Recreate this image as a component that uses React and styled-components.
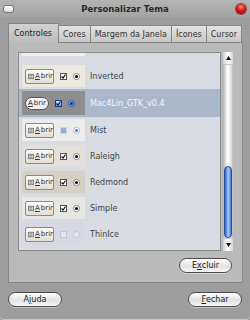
import React from 'react';
import styled, { createGlobalStyle, css } from 'styled-components';

const Global = createGlobalStyle`
  html, body { margin: 0; padding: 0; background: #9c9c9c; }
  body { font-family: "DejaVu Sans", "Liberation Sans", sans-serif; }
`;

const Window = styled.div`
  width: 250px;
  height: 320px;
  box-sizing: border-box;
  background: #9d9d9d;
  display: flex;
  flex-direction: column;
  border-bottom: 1px solid #c4c4c4;
  border-radius: 0 0 4px 4px;
  overflow: hidden;
`;

const TitleBar = styled.div`
  height: 17px;
  display: flex;
  align-items: center;
  padding: 0 4px 0 3px;
  background: linear-gradient(#b4b4b4, #a4a4a4);
`;

const Title = styled.div`
  flex: 1;
  text-align: center;
  font-size: 8.5px;
  font-weight: bold;
  color: #2a2a2a;
  padding-top: 1px;
`;

const Pill = styled.div`
  width: 9px;
  height: 6px;
  border: 1px solid #777;
  border-radius: 3px;
  background: linear-gradient(#ffffff, #dcdcdc);
`;

const CloseBall = styled.div`
  width: 10px;
  height: 10px;
  border-radius: 50%;
  background: radial-gradient(circle at 50% 30%, #ff8a80 0, #e0140c 45%, #8c0000 100%);
  box-shadow: 0 0 0 1px #7a4040;
`;

const Body = styled.div`
  flex: 1;
  display: flex;
  flex-direction: column;
  padding: 6px 7px 0 8px;
`;

const Tabs = styled.div`
  display: flex;
  align-items: flex-end;
  height: 19px;
`;

const Tab = styled.div`
  box-sizing: border-box;
  font-size: 8px;
  color: #333;
  padding: 0 4px;
  height: 17px;
  display: flex;
  align-items: center;
  border: 1px solid #858585;
  border-bottom: none;
  margin-left: -1px;
  background: linear-gradient(#e4e4e4, #c6c6c6);
  ${p => p.$active && css`
    margin-left: 0;
    padding: 0 6px 0 5px;
    background: linear-gradient(#d2d2d2, #bcbcbc);
    color: #222;
    position: relative;
    z-index: 1;
    margin-bottom: -1px;
    height: 20px;
  `}
`;

const Panel = styled.div`
  box-sizing: border-box;
  height: 241px;
  background: #bababa;
  border: 1px solid #858585;
  padding: 9px 9px 0 9px;
  display: flex;
  flex-direction: column;
`;

const ScrollArea = styled.div`
  display: flex;
  gap: 2px;
  height: 199px;
`;

const List = styled.div`
  box-sizing: border-box;
  width: 203px;
  height: 199px;
  background: #d8dce2;
  border: 1px solid #8a8a8a;
  overflow: hidden;
`;

const Stub = styled.div`
  height: 10px;
  padding-left: 3px;
`;

const StubBox = styled.div`
  width: 63px;
  height: 3px;
  background: #f1efe9;
`;

const Row = styled.div`
  height: ${p => p.$h}px;
  display: flex;
  align-items: center;
  padding-left: 3px;
  gap: 5px;
  background: ${p => (p.$selected ? '#aab8cc' : 'transparent')};
`;

const Preview = styled.div`
  box-sizing: border-box;
  width: 63px;
  height: ${p => (p.$tall ? 24 : 22)}px;
  background: ${p => p.$bg};
  display: flex;
  align-items: center;
  padding-left: 3px;
  gap: 6px;
`;

const Name = styled.div`
  font-size: 8px;
  color: ${p => (p.$selected ? '#f4f6fa' : '#444')};
`;

const AbrirButton = styled.div`
  box-sizing: border-box;
  height: 15px;
  width: 29px;
  display: flex;
  align-items: center;
  gap: 1px;
  padding-left: 2px;
  font-size: 7px;
  color: #333;
  border: 1px solid #8e8a82;
  border-radius: 2px;
  background: linear-gradient(#fbfaf7, #e2ded5);
  ${p => p.$mac && css`
    width: 24px;
    height: 13px;
    justify-content: center;
    padding: 0;
    border-radius: 7px;
    border-color: #555;
    background: linear-gradient(#ffffff, #e6e6e6 60%, #f8f8f8);
  `}
  u { text-decoration: underline; }
`;

const Check = styled.div`
  box-sizing: border-box;
  width: 7px;
  height: 7px;
  border: 1px solid ${p => p.$border || '#555'};
  background: ${p => p.$fill || '#fff'};
  display: flex;
  align-items: center;
  justify-content: center;
`;

const Radio = styled.div`
  box-sizing: border-box;
  width: 7px;
  height: 7px;
  border-radius: 50%;
  border: 1px solid ${p => p.$border || '#888'};
  background: ${p => p.$fill || '#fff'};
  display: flex;
  align-items: center;
  justify-content: center;
  &::after {
    content: '';
    width: 3px;
    height: 3px;
    border-radius: 50%;
    background: ${p => p.$dot || '#111'};
  }
`;

const Scrollbar = styled.div`
  width: 10px;
  height: 199px;
  display: flex;
  flex-direction: column;
  background: linear-gradient(90deg, #b4b4b4, #ffffff 45%, #e4e4e4 80%, #b4b4b4);
`;

const Arrow = styled.div`
  height: 12px;
  display: flex;
  align-items: center;
  justify-content: center;
  background: linear-gradient(90deg, #d0d0d0, #ffffff 50%, #d6d6d6);
  border-bottom: ${p => (p.$up ? '1px solid #c8c8c8' : 'none')};
  border-top: ${p => (p.$up ? 'none' : '1px solid #c8c8c8')};
`;

const Trough = styled.div`
  flex: 1;
  display: flex;
  flex-direction: column;
  justify-content: flex-end;
  padding: 0 1px;
`;

const Thumb = styled.div`
  height: 72px;
  border-radius: 4px;
  background: linear-gradient(90deg, #2e5fc8, #7fb0f4 40%, #a9cdfa 55%, #3c74d8);
  border: 1px solid #2a4c98;
  box-sizing: border-box;
`;

const ActionRow = styled.div`
  display: flex;
  justify-content: flex-end;
  padding: 7px 1px 0 0;
`;

const Button = styled.div`
  box-sizing: border-box;
  width: ${p => p.$w}px;
  height: 15px;
  border: 1px solid #4a4a4a;
  border-radius: 8px;
  background: linear-gradient(#ffffff, #e2e2e2 55%, #f6f6f6);
  font-size: 8px;
  color: #222;
  display: flex;
  align-items: center;
  justify-content: center;
  box-shadow: 0 1px 0 rgba(255,255,255,0.4);
`;

const Footer = styled.div`
  display: flex;
  justify-content: space-between;
  padding: 9px 1px 0 0;
`;

const DocIcon = () => (
  <svg width="8" height="7" viewBox="0 0 8 7">
    <rect x="0.5" y="0.5" width="7" height="6" fill="#e8e8e8" stroke="#666" />
    <path d="M2 2.5h4M2 4.5h4" stroke="#666" />
  </svg>
);

const Tick = ({ color = '#111' }) => (
  <svg width="5" height="5" viewBox="0 0 5 5">
    <path d="M0.5 2.5l1.5 1.5 2.5-3.5" stroke={color} strokeWidth="1.2" fill="none" />
  </svg>
);

const themes = [
  { name: 'Inverted', bg: '#ece8de', h: 26 },
  { name: 'Mac4Lin_GTK_v0.4', bg: '#8e8e8e', h: 28, mac: true, selected: true },
  { name: 'Mist', bg: '#ececec', h: 26, mist: true },
  { name: 'Raleigh', bg: '#e3e0da', h: 26 },
  { name: 'Redmond', bg: '#d6d0c4', h: 26 },
  { name: 'Simple', bg: '#e6e6e2', h: 26 },
  { name: 'ThinIce', bg: '#d6d8e4', h: 26, ice: true },
];

const Sample = ({ t }) => {
  if (t.mac) {
    return (
      <Preview $bg={t.bg} $tall>
        <AbrirButton $mac><u>A</u>brir</AbrirButton>
        <Check $border="#1a3a8a" $fill="linear-gradient(#cfe4ff, #5c9cf0)"><Tick color="#0a1a50" /></Check>
        <Radio $border="#2a5cb8" $fill="radial-gradient(#bfe0ff, #3d86e8)" $dot="#0a2a70" />
      </Preview>
    );
  }
  if (t.mist) {
    return (
      <Preview $bg={t.bg}>
        <AbrirButton><DocIcon /><u>A</u>brir</AbrirButton>
        <Check $border="#c8d4e8" $fill="#8fb0e0" />
        <Radio $border="#a8b8d0" $dot="#4a7fd0" />
      </Preview>
    );
  }
  if (t.ice) {
    return (
      <Preview $bg={t.bg}>
        <AbrirButton><DocIcon /><u>A</u>brir</AbrirButton>
        <Check $border="#c0c4d0" $fill="#e4e6ee" />
        <Radio $border="#c0c4d0" $fill="#e4e6ee" $dot="transparent" />
      </Preview>
    );
  }
  return (
    <Preview $bg={t.bg}>
      <AbrirButton><DocIcon /><u>A</u>brir</AbrirButton>
      <Check><Tick /></Check>
      <Radio />
    </Preview>
  );
};

export default function App() {
  return (
    <>
      <Global />
      <Window>
        <TitleBar>
          <Pill />
          <Title>Personalizar Tema</Title>
          <CloseBall />
        </TitleBar>
        <Body>
          <Tabs>
            <Tab $active>Controles</Tab>
            <Tab>Cores</Tab>
            <Tab>Margem da Janela</Tab>
            <Tab>Ícones</Tab>
            <Tab>Cursor</Tab>
          </Tabs>
          <Panel>
            <ScrollArea>
              <List>
                <Stub><StubBox /></Stub>
                {themes.map((t, i) => (
                  <Row key={i} $h={t.h} $selected={t.selected}>
                    <Sample t={t} />
                    <Name $selected={t.selected}>{t.name}</Name>
                  </Row>
                ))}
              </List>
              <Scrollbar>
                <Arrow $up>
                  <svg width="5" height="4" viewBox="0 0 5 4"><path d="M2.5 0L5 4H0z" fill="#111" /></svg>
                </Arrow>
                <Trough><Thumb /></Trough>
                <Arrow>
                  <svg width="5" height="4" viewBox="0 0 5 4"><path d="M0 0h5L2.5 4z" fill="#111" /></svg>
                </Arrow>
              </Scrollbar>
            </ScrollArea>
            <ActionRow>
              <Button $w={53}>E<u>x</u>cluir</Button>
            </ActionRow>
          </Panel>
          <Footer>
            <Button $w={54}>A<u>j</u>uda</Button>
            <Button $w={54}><u>F</u>echar</Button>
          </Footer>
        </Body>
      </Window>
    </>
  );
}
